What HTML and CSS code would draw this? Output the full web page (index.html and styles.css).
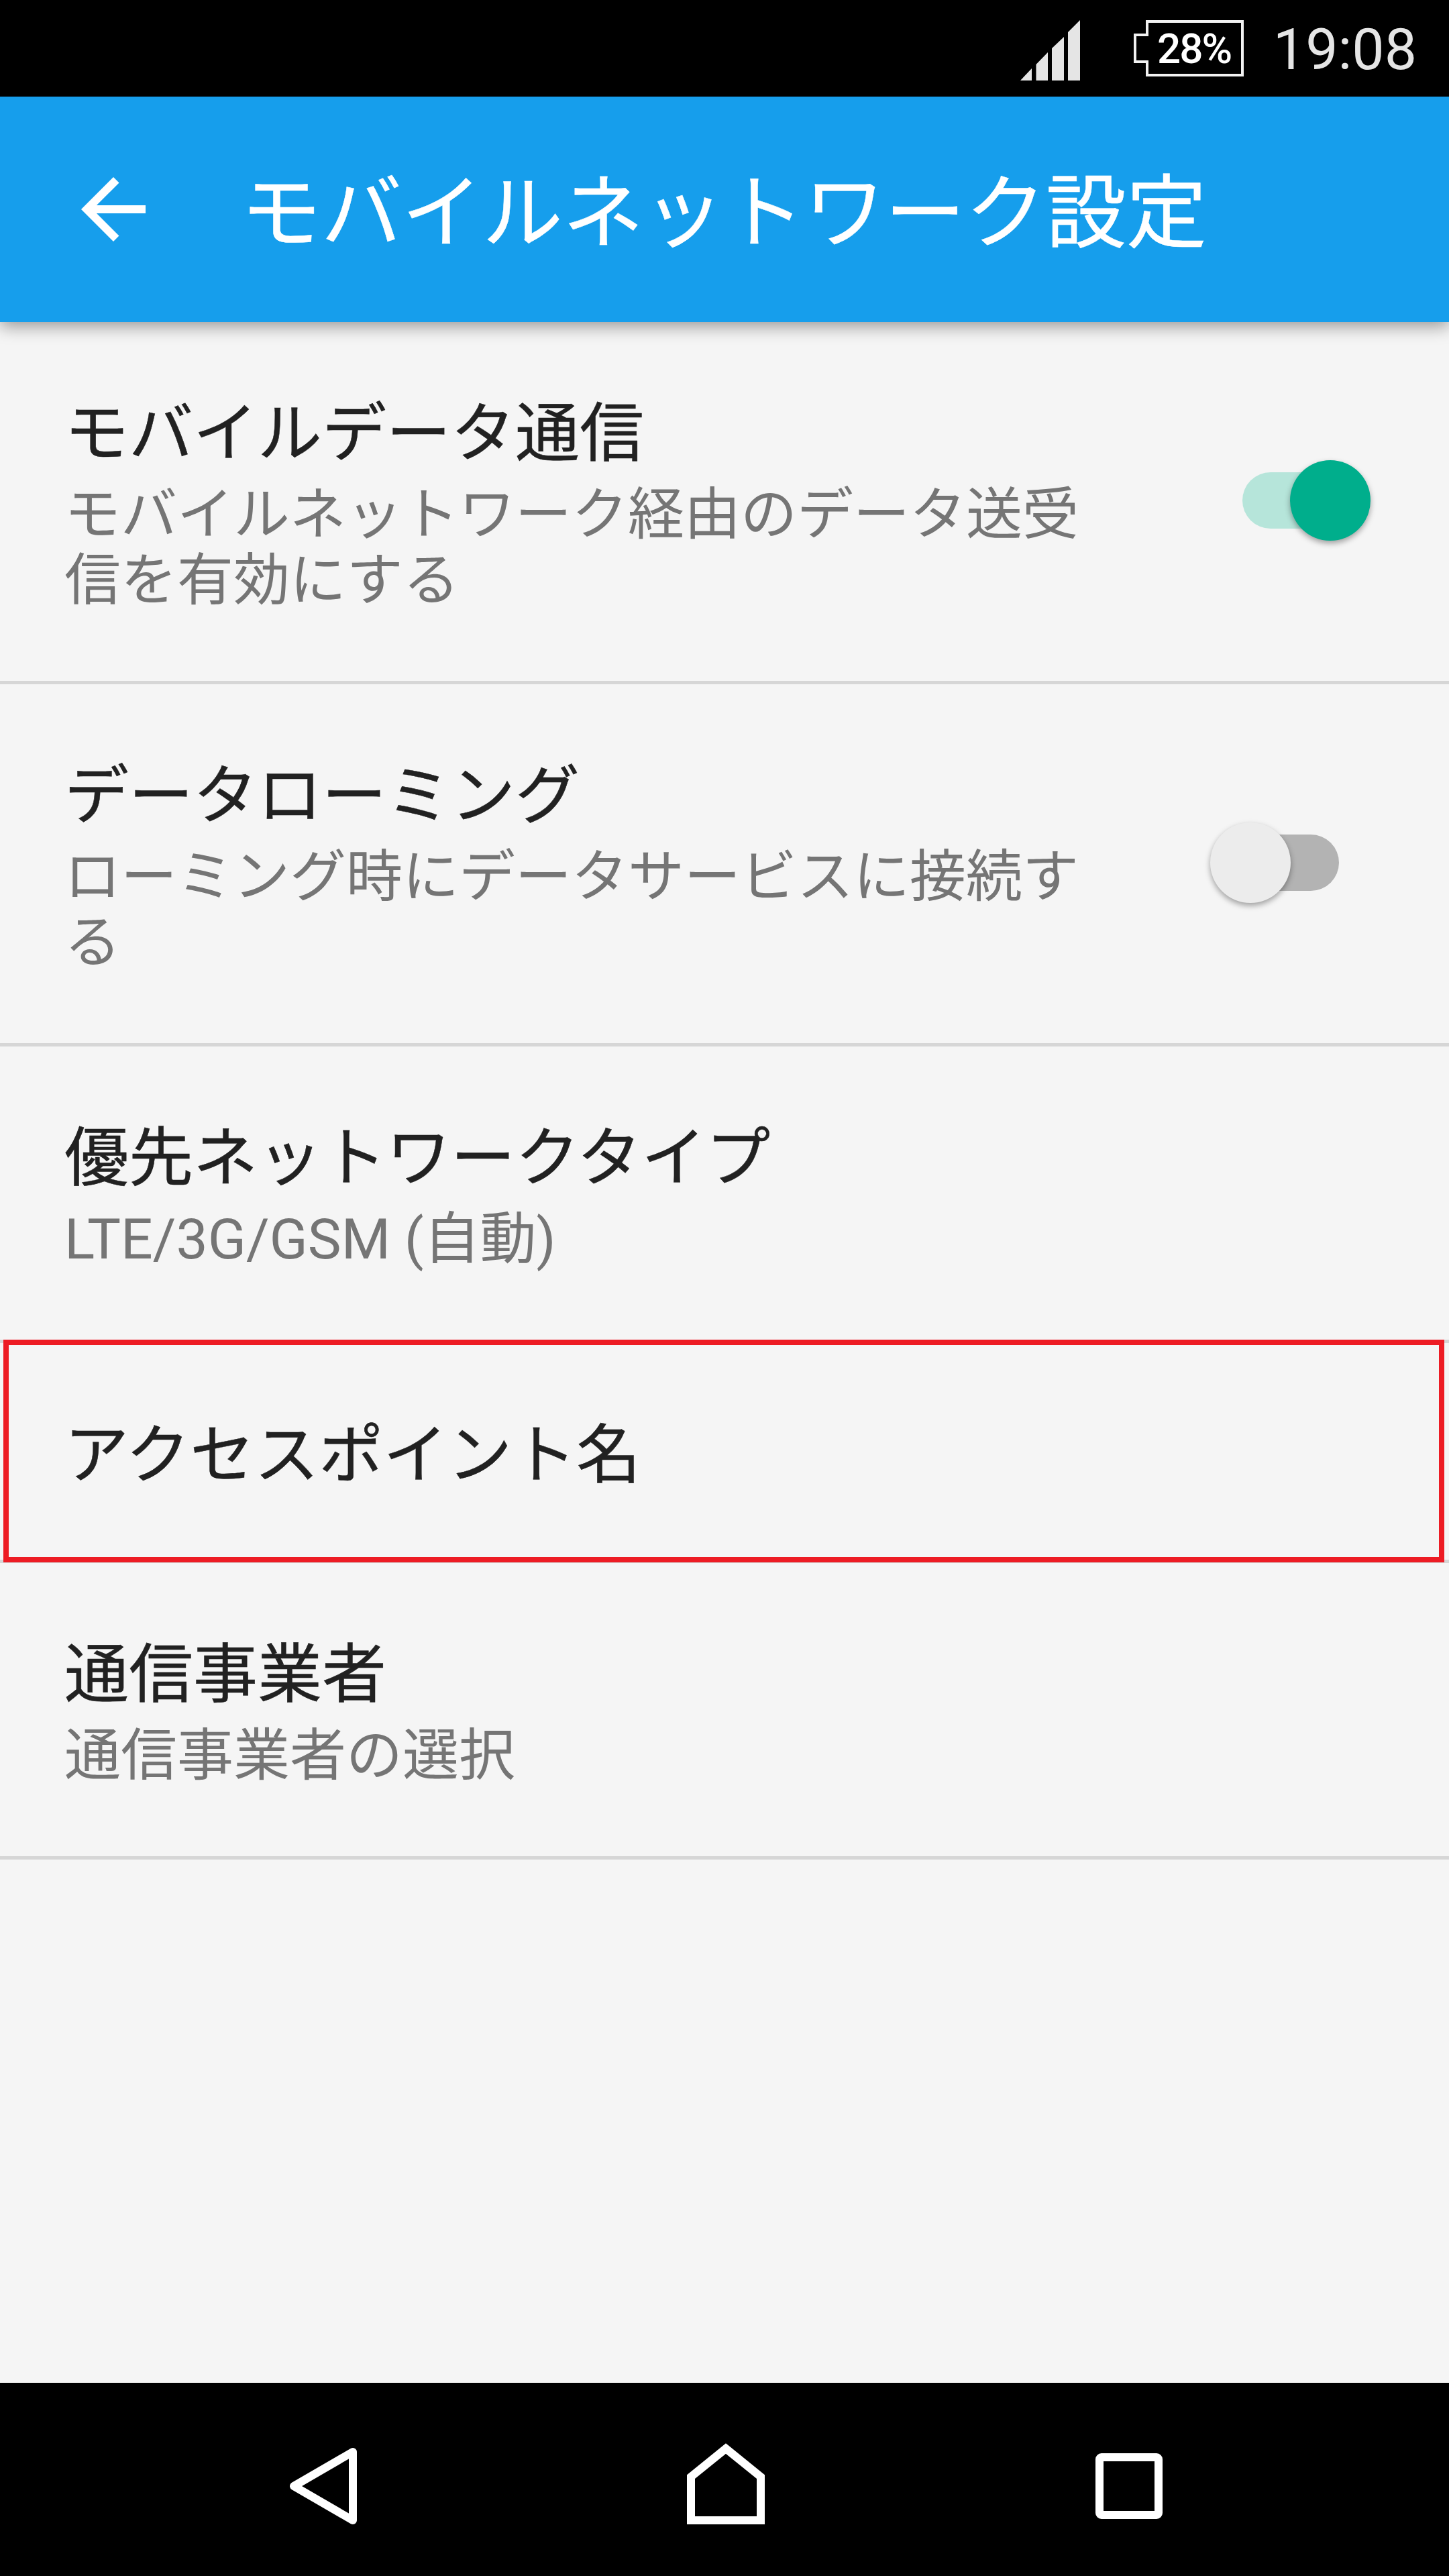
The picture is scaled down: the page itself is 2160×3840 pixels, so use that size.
FILE: index.html
```html
<!doctype html>
<html>
<head>
<meta charset="utf-8">
<title>モバイルネットワーク設定</title>
<link rel="stylesheet" href="styles.css">
</head>

<body>
	<div class="status">
		<svg class="signal" width="89" height="90" viewBox="0 0 89 90">
			<polygon points="0,90 17,72 17,90"/>
			<polygon points="23.5,66 41,48 41,90 23.5,90"/>
			<polygon points="47,42 65,25 65,90 47,90"/>
			<polygon points="71,18 89,0 89,90 71,90"/>
		</svg>
		<svg class="battery" width="164" height="84" viewBox="0 0 164 84">
			<path d="M20 2H162V82H20V62H2V22H20Z"/>
			<text x="90" y="64" text-anchor="middle">28%</text>
		</svg>
		<span class="time">19:08</span>
	</div>
	<div class="appbar">
		<svg class="back" width="144" height="144" viewBox="0 0 24 24">
			<path d="M20 11H7.83l5.59-5.59L12 4l-8 8 8 8 1.41-1.41L7.83 13H20v-2z"/>
		</svg>
		<h1>モバイルネットワーク設定</h1>
	</div>
	<div class="list">
		<div class="row row-a">
			<div class="text">
				<p class="name">モバイルデータ通信</p>
				<p class="sub">モバイルネットワーク経由のデータ送受信を有効にする</p>
			</div>
			<div class="switch on"><i></i><b></b></div>
		</div>
		<div class="row row-a">
			<div class="text">
				<p class="name">データローミング</p>
				<p class="sub">ローミング時にデータサービスに接続する</p>
			</div>
			<div class="switch off"><i></i><b></b></div>
		</div>
		<div class="row row-b">
			<div class="text">
				<p class="name">優先ネットワークタイプ</p>
				<p class="sub">LTE/3G/GSM (自動)</p>
			</div>
		</div>
		<div class="row row-c mark">
			<div class="text">
				<p class="name">アクセスポイント名</p>
			</div>
		</div>
		<div class="row row-b">
			<div class="text">
				<p class="name">通信事業者</p>
				<p class="sub">通信事業者の選択</p>
			</div>
		</div>
	</div>
	<div class="nav">
		<svg width="144" height="144" viewBox="0 0 144 144">
			<path d="M117 21V123L29 72Z"/>
		</svg>
		<svg width="144" height="144" viewBox="0 0 144 144">
			<path class="miter" d="M72 16L124 58V123H20V58Z"/>
		</svg>
		<svg width="144" height="144" viewBox="0 0 144 144">
			<rect x="28" y="29" width="88" height="86" rx="3"/>
		</svg>
	</div>
</body>
</html>
```

FILE: styles.css
```css
*{
	margin: 0;
	padding: 0;
	box-sizing: border-box;
}
body{
	width: 2160px;
	height: 3840px;
	display: flex;
	flex-direction: column;
	background-color: #f5f5f5;
	font-family: Roboto, "Noto Sans CJK JP", sans-serif;
	overflow: hidden;
}
.status{
	height: 144px;
	background-color: #000;
	display: flex;
	align-items: center;
	justify-content: flex-end;
	padding-right: 48px;
}
.signal{
	fill: #e5e5e5;
	margin-top: 6px;
	margin-right: 80px;
}
.battery{
	margin-right: 44px;
}
.battery path{
	fill: none;
	stroke: #f2f2f2;
	stroke-width: 4;
}
.battery text{
	fill: #fff;
	font-size: 62px;
	font-weight: 500;
	letter-spacing: -2px;
}
.time{
	color: #e5e5e5;
	font-size: 86px;
	line-height: 100px;
	margin-top: 4px;
}
.appbar{
	height: 336px;
	background-color: #169eec;
	display: flex;
	align-items: center;
	padding-left: 97px;
	box-shadow: 0 6px 24px rgba(0,0,0,.4);
	position: relative;
	z-index: 2;
}
.back{
	fill: #fff;
}
.appbar h1{
	color: #fff;
	font-size: 120px;
	font-weight: 400;
	margin-left: 118px;
	padding-bottom: 8px;
	-webkit-text-stroke: .5px #fff;
}
.list{
	flex: 1;
}
.row{
	display: flex;
	align-items: center;
	justify-content: space-between;
	padding: 0 117px 0 96px;
	border-bottom: 5px solid #d6d6d6;
	position: relative;
}
.row-a{
	height: 540px;
}
.row-b{
	height: 442px;
}
.row-c{
	height: 328px;
}
.text{
	width: 1540px;
	padding-top: 6px;
}
.row-c .text{
	padding-top: 10px;
}
.name{
	color: #212121;
	font-size: 96px;
	line-height: 118px;
	-webkit-text-stroke: .5px #212121;
}
.sub{
	color: #757575;
	font-size: 84px;
	line-height: 98px;
	margin-top: 14px;
}
.mark::after{
	content: "";
	position: absolute;
	left: 5px;
	right: 7px;
	top: -5px;
	bottom: -4px;
	border: 8px solid #ed1c24;
}
.switch{
	width: 239px;
	height: 120px;
	position: relative;
	margin-bottom: 3px;
}
.switch i{
	position: absolute;
	top: 18px;
	width: 180px;
	height: 84px;
	border-radius: 42px;
}
.switch b{
	position: absolute;
	top: 0;
	width: 120px;
	height: 120px;
	border-radius: 50%;
	box-shadow: 0 4px 8px rgba(0,0,0,.35);
}
.on i{
	left: 48px;
	background-color: #b6e5da;
}
.on b{
	right: 0;
	background-color: #00ae8c;
}
.off i{
	left: 12px;
	background-color: #b3b3b3;
}
.off b{
	left: 0;
	background-color: #ececec;
}
.nav{
	height: 288px;
	background-color: #000;
	display: flex;
	align-items: center;
	gap: 457px;
	padding: 20px 0 0 409px;
}
.nav path, .nav rect{
	fill: none;
	stroke: #fff;
	stroke-width: 12;
	stroke-linejoin: round;
}
.nav path.miter{
	stroke-linejoin: miter;
}
```
